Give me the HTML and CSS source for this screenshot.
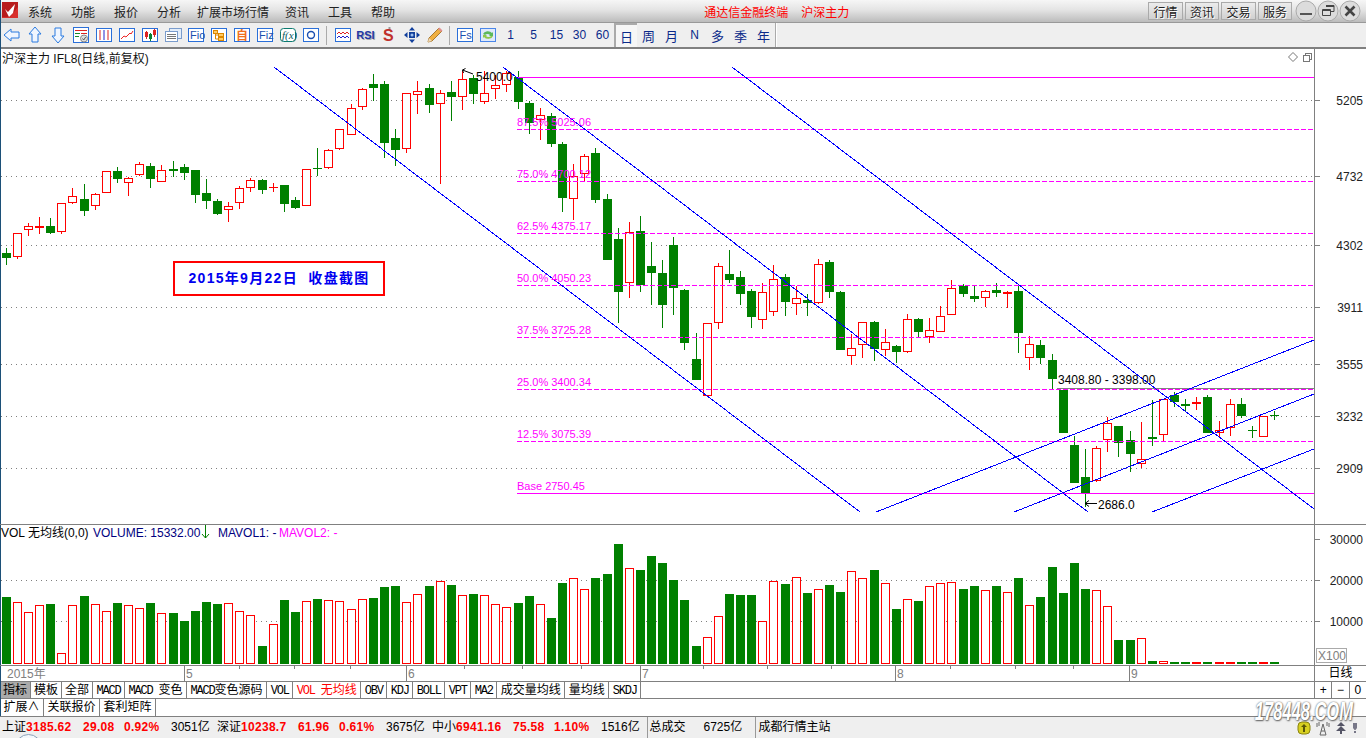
FILE: index.html
```html
<!DOCTYPE html>
<html lang="zh-CN">
<head>
  <meta charset="UTF-8" />
  <title>通达信金融终端 沪深主力</title>
  <link rel="stylesheet" href="styles.css">
</head>
<body>
<div class="app">
  <!-- menu -->
  <div class="menubar">
    <svg class="logo" width="16" height="16" viewBox="0 0 16 16"><rect width="16" height="16" fill="#d8302c"/><path d="M0 0h16v5L8 15H0z" fill="#b81c1c"/><path d="M3 7l3 3 7-8-2 9-4 4z" fill="#fff"/></svg>
    <nav class="menu">
      <span>系统</span><span>功能</span><span>报价</span><span class="menu-narrow">分析</span><span class="menu-narrow">扩展市场行情</span><span>资讯</span><span>工具</span><span>帮助</span>
    </nav>
    <div class="app-title"><span>通达信金融终端</span><span>沪深主力</span></div>
    <div class="mode-buttons"><button>行情</button><button>资讯</button><button>交易</button><button>服务</button></div>
    <div class="win-buttons">
      <svg width="22" height="22" viewBox="0 0 22 22"><circle cx="11" cy="11" r="10" class="win-circle"/><rect x="5" y="13" width="12" height="2" fill="#555"/></svg>
      <svg width="22" height="22" viewBox="0 0 22 22"><circle cx="11" cy="11" r="10" class="win-circle"/><path d="M9 5.5h8v6h-3M5.500 9.500h8v6h-8zM5.500 10.500h8M9 6.500h8" fill="none" stroke="#444"/></svg>
      <svg width="22" height="22" viewBox="0 0 22 22"><circle cx="11" cy="11" r="10" class="win-circle"/><path d="M6.500 6.500l9 9M15.500 6.500l-9 9" stroke="#444" stroke-width="2.600"/></svg>
    </div>
  </div>

  <!-- toolbar -->
  <div class="toolbar">
    <div class="tool"><svg width="18" height="16" viewBox="0 0 18 16"><path d="M1 8l7-6v3h8v6H8v3z" class="arrow"/></svg></div>
    <div class="tool"><svg width="16" height="18" viewBox="0 0 16 18"><path d="M8 1l6 7h-3v8H5V8H2z" class="arrow"/></svg></div>
    <div class="tool"><svg width="16" height="18" viewBox="0 0 16 18"><path d="M8 17l6-7h-3V2H5v8H2z" class="arrow"/></svg></div>
    <div class="tool"><svg width="18" height="18" viewBox="0 0 18 18"><rect x="1.500" y="1.500" width="15" height="15" class="box"/><path d="M3 4.500h12" stroke="#d22"/><path d="M3 7.500h5M3 10.500h4" stroke="#1a8a2a"/><path d="M9 7.500h6" stroke="#d22"/><circle cx="12" cy="12.500" r="3.500" fill="#ddd" stroke="#888"/><path d="M10.500 12.500l1.200 1.500 2-3" stroke="#555" fill="none"/></svg></div>
    <div class="tool"><svg width="18" height="16" viewBox="0 0 18 16"><rect x="1.500" y="1.500" width="15" height="13" class="box"/><path d="M4 4h2M4 6h2M4 8h2M4 10h2M4 12h2M12 4h2M12 6h2M12 8h2M12 10h2M12 12h2" stroke="#d22"/><path d="M8 4h2M8 6h2M8 8h2M8 10h2M8 12h2" stroke="#22c"/></svg></div>
    <div class="tool"><svg width="18" height="16" viewBox="0 0 18 16"><rect x="1.500" y="1.500" width="15" height="13" class="box"/><path d="M3 12l3-3 2 1 4-4 1 1 2-3" stroke="#e22" fill="none"/></svg></div>
    <div class="tool"><svg width="18" height="16" viewBox="0 0 18 16"><rect x="1.500" y="1.500" width="15" height="13" class="box"/><path d="M5.500 4v8" stroke="#d22"/><rect x="4" y="5" width="3" height="5" fill="#d22"/><path d="M9.500 6v8" stroke="#088030"/><rect x="8" y="7" width="3" height="5" fill="#088030"/><path d="M13.500 2v8" stroke="#d22"/><rect x="12" y="3" width="3" height="5" fill="#d22"/></svg></div>
    <div class="tool"><svg width="18" height="16" viewBox="0 0 18 16"><rect x="5.500" y="1.500" width="12" height="10" fill="#e4eefa" stroke="#7a9ccc"/><rect x="1.500" y="4.500" width="12" height="10" fill="#fff" stroke="#7a9ccc"/><path d="M3 7.500h9M3 9.500h9M3 11.500h9" stroke="#777"/></svg></div>
    <div class="tool"><svg width="18" height="16" viewBox="0 0 18 16"><rect x="1.500" y="1.500" width="15" height="13" class="box"/><text x="3" y="12" class="icon-text">Fio</text></svg></div>
    <div class="tool"><svg width="18" height="16" viewBox="0 0 18 16"><rect x="1.500" y="1.500" width="15" height="13" class="box"/><rect x="3.500" y="3.500" width="4" height="3" fill="#fc6" stroke="#d80"/><rect x="8.500" y="6.500" width="5" height="3" fill="#fc6" stroke="#d80"/><rect x="8.500" y="10.500" width="5" height="3" fill="#fc6" stroke="#d80"/><path d="M5.500 7v5h3M5.500 8h3" stroke="#d80" fill="none"/></svg></div>
    <div class="tool"><svg width="18" height="16" viewBox="0 0 18 16"><rect x="1.500" y="1.500" width="15" height="13" class="box"/><text x="3" y="13" class="icon-cjk">自</text></svg></div>
    <div class="tool"><svg width="18" height="16" viewBox="0 0 18 16"><rect x="1.500" y="1.500" width="15" height="13" class="box"/><text x="3" y="12" class="icon-text">Fiz</text></svg></div>
    <div class="tool"><svg width="18" height="16" viewBox="0 0 18 16"><rect x="1.500" y="1.500" width="15" height="13" rx="3" fill="#fff" stroke="#0a7a70"/><text x="3" y="12" class="icon-fx">f(x)</text></svg></div>
    <div class="tool"><svg width="18" height="16" viewBox="0 0 18 16"><rect x="1.500" y="1.500" width="15" height="13" class="box"/><circle cx="9" cy="8" r="3.500" fill="none" stroke="#1a4fb0" stroke-width="1.400"/></svg></div>
    <div class="tool-sep"></div>
    <div class="tool"><svg width="18" height="16" viewBox="0 0 18 16"><rect x="1.500" y="1.500" width="15" height="13" class="box"/><path d="M3 7l2-2 2 2 2-2 2 2 2-2 2 2" stroke="#d22" fill="none"/><path d="M3 11l2-2 2 2 2-2 2 2 2-2 2 2" stroke="#22c" fill="none"/></svg></div>
    <div class="tool"><span class="rsi">RSI</span></div>
    <div class="tool"><svg width="18" height="18" viewBox="0 0 18 18"><path d="M8.500 1h2v3h-2z" fill="#999"/><text x="3" y="15" class="icon-s">S</text></svg></div>
    <div class="tool"><svg width="18" height="18" viewBox="0 0 18 18"><path d="M9 1l3 3.500H6zM9 17l-3-3.500h6zM1 9l3.500-3v6zM17 9l-3.500 3V6z" fill="#12409c"/><rect x="6" y="6" width="6" height="6" fill="#12409c"/><circle cx="9" cy="9" r="1.500" fill="#9cc0f0"/></svg></div>
    <div class="tool"><svg width="18" height="18" viewBox="0 0 18 18"><path d="M2 16l1-4L13 2l3 3L6 15z" fill="#f0b040" stroke="#a87a30"/><path d="M2 16l1-4 3 3z" fill="#eed8b8"/><path d="M12 3l3 3 1.500-1.500-3-3z" fill="#e09090"/></svg></div>
    <div class="tool-sep tool-sep-thin"></div>
    <div class="tool"><svg width="18" height="16" viewBox="0 0 18 16"><rect x="1.500" y="1.500" width="15" height="13" class="box"/><text x="3.500" y="12" class="icon-text">Fs</text></svg></div>
    <div class="tool"><svg width="18" height="16" viewBox="0 0 18 16"><rect x="1.500" y="1.500" width="15" height="13" fill="#dfe9fb" stroke="#4a86e8"/><path d="M4 7a5 4 0 0 1 9-1l1-1v4h-4l1-1a3 2 0 0 0-5 0z" fill="#5cb85c"/><path d="M14 9a5 4 0 0 1-9 1l-1 1V8h4L7 9a3 2 0 0 0 5 0z" fill="#8fc84a"/></svg></div>
    <div class="tool period">1</div>
    <div class="tool period">5</div>
    <div class="tool period">15</div>
    <div class="tool period">30</div>
    <div class="tool period">60</div>
    <div class="tool period period-cjk period-active">日</div>
    <div class="tool period period-cjk">周</div>
    <div class="tool period period-cjk">月</div>
    <div class="tool period">N</div>
    <div class="tool period period-cjk">多</div>
    <div class="tool period period-cjk">季</div>
    <div class="tool period period-cjk">年</div>
    <div class="tool-end"></div>
  </div>

  <!-- K线 -->
  <div class="panel price-panel">
    <svg id="priceChart" width="1366" height="475" viewBox="0 49 1366 475"></svg>
    <div class="chart-title">沪深主力 IFL8(日线,前复权)</div>
    <div class="chart-note">2015年9月22日&nbsp; 收盘截图</div>
  </div>

  <!-- 成交量 -->
  <div class="panel volume-panel">
    <svg id="volumeChart" width="1366" height="140" viewBox="0 525 1366 140"></svg>
  </div>

  <div class="date-row">
    <svg id="dateAxis" width="1314" height="15" viewBox="0 666 1314 15"></svg>
    <div class="period-name">日线</div>
  </div>

  <div class="tab-row">
    <div class="tabs">
      <span class="tab tab-cjk tab-active">指标</span>
      <span class="tab tab-cjk">模板</span>
      <span class="tab tab-cjk">全部</span>
      <span class="tab"><span class="mono">MACD</span></span>
      <span class="tab"><span class="mono">MACD </span>变色</span>
      <span class="tab"><span class="mono">MACD</span>变色源码</span>
      <span class="tab"><span class="mono">VOL</span></span>
      <span class="tab tab-on"><span class="mono">VOL </span>无均线</span>
      <span class="tab"><span class="mono">OBV</span></span>
      <span class="tab"><span class="mono">KDJ</span></span>
      <span class="tab"><span class="mono">BOLL</span></span>
      <span class="tab"><span class="mono">VPT</span></span>
      <span class="tab"><span class="mono">MA2</span></span>
      <span class="tab">成交量均线</span>
      <span class="tab">量均线</span>
      <span class="tab"><span class="mono">SKDJ</span></span>
    </div>
    <div class="zoom-cells"><span>+</span><span>−</span><span>0</span></div>
  </div>

  <div class="ext-row">
    <span class="tab">扩展∧</span>
    <span class="tab">关联报价</span>
    <span class="tab">套利矩阵</span>
  </div>

  <!-- 状态栏 -->
  <div class="statusbar">
    <div class="status-index"><span>上证</span><b>3185.62</b><b>29.08</b><b>0.92%</b><span>3051亿</span></div>
    <div class="status-index"><span>深证</span><b>10238.7</b><b>61.96</b><b>0.61%</b><span>3675亿</span></div>
    <div class="status-index"><span>中小</span><b>6941.16</b><b>75.58</b><b>1.10%</b><span>1516亿</span></div>
    <div class="status-total"><span>总成交</span><span>6725亿</span></div>
    <div class="status-site">成都行情主站</div>
    <div class="status-icons">
      <svg width="14" height="14" viewBox="0 0 14 14"><rect x="1" y="1" width="12" height="12" rx="4" fill="#d8d020" stroke="#8a8410"/><path d="M7 3l3 3H8v5H6V6H4z" fill="#5a5608"/></svg>
      <svg width="14" height="16" viewBox="0 0 14 16"><path d="M7 4L4 15h6zM5 11h4M1 3v4M13 3v4M3 2v4M11 2v4" fill="none" stroke="#666"/></svg>
      <svg width="12" height="14" viewBox="0 0 12 14"><path d="M6 1l4 4H2zM6 5l5 5H1zM5 10h2v3H5z" fill="#556"/></svg>
      <svg width="6" height="12" viewBox="0 0 6 12"><path d="M1 1h4v5L3.500 8h-1L1 6zM2 9h2v2H2z" fill="#778"/></svg>
    </div>
  </div>

  <div class="start-orb"></div>
  <div class="watermark">178448.COM</div>
</div>
<script src="chart.js"></script>
</body>
</html>
```
FILE: styles.css
```css
html, body {
  margin: 0;
  height: 100%;
  overflow: hidden;
  background: #fff;
}
body, svg text {
  font-family: "Liberation Sans", "Noto Sans CJK SC", sans-serif;
  font-size: 12px;
  color: #000;
}
.app {
  position: relative;
  width: 1366px;
  height: 738px;
  overflow: hidden;
}
.app::before {
  content: "";
  position: absolute;
  left: 0;
  top: 0;
  bottom: 22px;
  width: 1px;
  background: #1c5078;
}

/* menu */
.menubar {
  display: flex;
  align-items: center;
  height: 22px;
  border-bottom: 1px solid #999;
  background: linear-gradient(#f6f6f6, #e4e4e4 45%, #bcbcbc);
}
.logo { margin: 0 0 2px 2px; }
.menu {
  display: flex;
  gap: 19px;
  margin-left: 10px;
  color: #222;
}
.menu-narrow { margin-right: -3px; }
.app-title {
  display: flex;
  gap: 13px;
  margin-left: 309px;
  color: #f00;
}
.mode-buttons {
  display: flex;
  gap: 2px;
  margin-left: 299px;
}
.mode-buttons button {
  width: 34.5px;
  height: 18px;
  padding: 0;
  border: 1px solid #aaa;
  background: linear-gradient(#ececec, #d0d0d0);
  font: inherit;
  color: #222;
  text-shadow: 1px 1px 0 #fff;
}
.win-buttons {
  display: flex;
  margin-left: 3px;
}
.win-circle {
  fill: #dcdcdc;
  stroke: #aaa;
}

/* toolbar */
.toolbar {
  display: flex;
  height: 24px;
  border-bottom: 2px solid #808080;
  background: #efefef;
}
.tool {
  display: flex;
  align-items: center;
  justify-content: center;
  flex: none;
  width: 23px;
}
.arrow {
  fill: #f0f6ff;
  stroke: #2a7ae0;
}
.box {
  fill: #fff;
  stroke: #2a6fd8;
}
.icon-text {
  font-size: 11px;
  fill: #1a4fb0;
}
.icon-cjk {
  font-size: 12px;
  font-weight: bold;
  fill: #f07020;
}
.icon-fx {
  font-family: "Liberation Serif", serif;
  font-size: 11px;
  font-style: italic;
  fill: #0a5a60;
}
.icon-s {
  font-size: 16px;
  font-weight: bold;
  fill: #c0302c;
}
.rsi {
  font-size: 11px;
  font-weight: bold;
  color: #2236a8;
  text-shadow: 1px 1px 0 #aaa;
}
.tool-sep {
  flex: none;
  width: 1px;
  margin: 3px 4px 2px 4px;
  background: #aaa;
}
.tool-sep-thin {
  margin: 3px 3px 2px 3px;
}
.period {
  color: #0a2a8a;
}
.period-cjk {
  font-size: 13px;
}
.period-active {
  box-sizing: border-box;
  border-left: 2px solid #aaa;
  border-top: 2px solid #aaa;
  background: #f6f6f6;
}
.tool-end {
  flex: none;
  width: 1px;
  background: #aaa;
  margin-left: 0;
  box-shadow: 1px 0 0 #fff;
}

/* chart panels */
.panel {
  position: relative;
  border-bottom: 1px solid #808080;
}
.panel svg {
  display: block;
}
.panel svg text {
  fill: #000;
}
.chart-title {
  position: absolute;
  left: 2px;
  top: 0;
  color: #111;
}
.chart-note {
  position: absolute;
  left: 173px;
  top: 212px;
  box-sizing: border-box;
  width: 212px;
  height: 35px;
  border: 2px solid #f00;
  background: #fff;
  color: #0000f0;
  font-size: 14px;
  font-weight: bold;
  letter-spacing: 1.3px;
  line-height: 31px;
  text-align: center;
}
.panel svg .fib-label { fill: #f0f; font-size: 11px; }
.panel svg .axis-label { fill: #222; }
.panel svg .vol-name { fill: #000080; }
.panel svg .vol-magenta { fill: #f0f; }

/* date axis + tabs */
.date-row, .tab-row, .ext-row {
  display: flex;
  border-bottom: 1px solid #808080;
}
.date-row { height: 15px; }
.date-row svg { display: block; flex: none; }
.date-row svg text { fill: #808080; }
.period-name {
  flex: 1;
  border-left: 1px solid #808080;
  line-height: 15px;
  text-align: center;
}
.tab-row { height: 16px; }
.tabs {
  display: flex;
  flex: none;
  width: 1314px;
}
.tab {
  box-sizing: content-box;
  padding: 0 3.5px;
  border-right: 1px solid #808080;
  line-height: 16px;
  white-space: pre;
}
.tab-cjk { padding: 0 3px; }
.tab-active { background: #aaa; }
.tab-on { color: #f00; }
.mono {
  font-family: "Liberation Mono", monospace;
  font-size: 12px;
  letter-spacing: -1.2px;
}
.zoom-cells {
  display: flex;
  flex: 1;
  border-left: 1px solid #808080;
}
.zoom-cells span {
  flex: 1;
  border-right: 1px solid #808080;
  line-height: 16px;
  text-align: center;
}
.zoom-cells span:last-child { border-right: 0; }
.ext-row { height: 17px; }
.ext-row .tab { line-height: 17px; }

/* status */
.statusbar {
  display: flex;
  align-items: center;
  height: 21px;
  padding-left: 2px;
  background: #efefef;
}
.status-index {
  display: grid;
  flex: none;
  grid-template-columns: 24px 57px 41px 47px 46px;
  align-items: baseline;
  width: 215px;
  line-height: 21px;
}
.status-index:nth-child(3) { width: 214.5px; }
.status-index b {
  color: #f00;
  letter-spacing: 0.3px;
}
.status-total {
  display: grid;
  flex: none;
  grid-template-columns: 54px 48px;
  height: 21px;
  padding-left: 2px;
  border-left: 1px solid #999;
  width: 105px;
  line-height: 21px;
}
.status-site {
  flex: none;
  padding-left: 3px;
  border-left: 1px solid #999;
  line-height: 21px;
}
.status-icons {
  display: flex;
  align-items: center;
  gap: 5px;
  margin-left: auto;
  padding-right: 8px;
}
.start-orb {
  position: absolute;
  left: 15px;
  top: 734px;
  width: 25px;
  height: 25px;
  border: 1px solid #8aa0b8;
  border-radius: 50%;
  background: #f4f8fb;
}
.watermark {
  position: absolute;
  left: 1232px;
  top: 697px;
  width: 134px;
  color: #fff;
  font-size: 25px;
  font-weight: bold;
  font-style: italic;
  text-align: center;
  text-shadow: 0 0 2px #555, 1px 1px 2px #666;
  transform: scaleX(0.66);
}
```
FILE: chart.js
```js
// x, 阴阳, wick top, body top, body bottom, wick bottom, volume top
const candles = [
  [6,'g',248,253,257,264,597],[17,'r',233,233,256,258,602],[28,'r',223,226,229,235,612],[39,'r',217,226,227,233,605],
  [50,'g',218,226,232,233,604],[61,'r',203,203,231,233,653],[72,'r',188,196,202,203,605],[84,'g',184,199,210,215,596],
  [95,'r',193,194,205,209,604],[106,'r',171,171,192,192,611],[117,'g',167,171,178,182,603],[128,'r',177,178,182,195,605],
  [139,'r',162,164,174,175,608],[150,'g',163,166,178,187,603],[161,'r',165,170,181,181,613],[173,'g',161,169,170,176,613],
  [184,'g',164,167,172,179,621],[195,'g',170,170,194,202,611],[206,'g',179,193,200,208,602],[217,'g',199,201,213,214,604],
  [228,'r',202,206,209,221,603],[239,'r',186,188,202,208,611],[250,'r',178,180,187,191,615],[262,'g',179,180,189,193,646],
  [273,'r',183,187,187,191,624],[284,'g',185,185,203,211,600],[295,'g',197,200,207,208,612],[306,'r',169,169,205,205,601],
  [317,'g',148,168,168,175,599],[328,'r',149,150,167,168,600],[339,'r',129,129,148,149,601],[351,'r',104,108,134,134,609],
  [362,'r',88,89,106,109,599],[373,'g',74,84,87,100,598],[384,'g',81,84,142,157,587],[395,'g',129,138,149,165,586],
  [406,'r',93,93,148,152,602],[417,'r',81,91,94,113,594],[429,'g',84,88,104,112,586],[440,'r',90,93,103,183,581],
  [451,'g',81,92,96,120,585],[462,'r',71,79,96,109,595],[473,'g',75,78,93,103,594],[484,'r',71,93,101,103,595],
  [495,'r',75,85,88,98,604],[506,'r',71,73,84,91,607],[518,'g',71,77,101,108,603],[529,'g',101,103,122,133,596],
  [540,'r',108,115,119,139,604],[551,'g',113,116,143,146,618],[562,'g',142,144,197,211,583],[573,'r',164,176,198,219,578],
  [584,'r',154,156,173,181,589],[595,'g',148,153,199,202,578],[607,'g',194,199,259,259,574],[618,'g',228,239,291,322,544],
  [629,'r',222,232,282,297,568],[640,'g',216,231,284,291,570],[651,'g',242,266,272,304,556],[662,'g',260,273,304,327,563],
  [673,'g',237,245,287,314,580],[684,'g',289,290,342,349,600],[696,'g',333,359,379,379,646],[707,'r',323,323,395,395,637],
  [718,'r',263,266,322,328,616],[729,'g',250,274,279,282,594],[740,'g',271,277,293,304,595],[751,'g',289,291,316,327,595],
  [762,'r',283,292,319,328,621],[773,'r',265,279,311,315,581],[785,'g',274,277,301,315,584],[796,'r',286,298,303,314,577],
  [807,'g',294,300,302,315,593],[818,'r',259,264,302,303,589],[829,'g',260,262,291,297,585],[840,'g',291,292,349,349,592],
  [851,'r',334,348,355,364,571],[862,'r',322,322,344,357,578],[874,'g',321,322,348,360,570],[885,'r',329,342,349,355,583],
  [896,'g',345,346,351,362,609],[907,'r',314,319,351,352,599],[918,'g',318,319,331,337,601],[929,'r',318,330,336,342,586],
  [940,'r',306,316,331,331,583],[951,'r',280,288,314,314,582],[963,'g',284,286,293,296,589],[974,'g',285,296,298,301,586],
  [985,'r',290,291,297,306,590],[996,'g',283,290,292,296,586],[1007,'r',291,292,293,307,592],[1018,'g',284,291,332,352,578],
  [1029,'r',336,344,357,369,605],[1040,'g',340,345,357,363,597],[1052,'g',354,360,378,388,567],[1063,'g',388,390,432,432,593],
  [1074,'g',436,445,482,482,563],[1085,'g',449,477,493,506,589],[1096,'r',446,448,480,481,590],[1107,'r',417,423,439,451,606],
  [1118,'g',426,426,442,456,640],[1130,'g',431,440,453,471,640],[1141,'r',422,459,463,467,638],[1152,'g',400,437,438,445,661],
  [1163,'r',399,399,434,441,661],[1174,'g',392,395,401,406,662],[1185,'g',399,404,405,410,662],[1196,'r',397,402,403,409,662],
  [1207,'g',395,397,432,432,662],[1219,'r',421,430,432,437,662],[1230,'r',399,404,427,435,662],[1241,'g',398,404,415,417,662],
  [1252,'g',426,430,430,437,662],[1263,'r',416,416,436,436,662],[1274,'g',411,415,415,419,662]
];

const priceTicks = [[5205,100],[4732,176],[4302,245],[3911,307],[3555,364],[3232,416],[2909,468]];
const volTicks = [[30000,539],[20000,580],[10000,621]];

const fibLines = [
  ['87.5% 5025.06',129],['75.0% 4700.12',181],['62.5% 4375.17',233],['50.0% 4050.23',285],
  ['37.5% 3725.28',337],['25.0% 3400.34',389],['12.5% 3075.39',441]
];

const channelLines = [
  [274,67,860,512],[503,67,1088,512],[732,67,1314,509],
  [876,512,1314,340],[1014,512,1314,394],[1152,512,1314,449]
];

const GREEN = '#008000';
const RED = '#ff0000';
const GRAY = '#808080';
const MAGENTA = '#ff00ff';
const BLUE = '#0000ff';

function add(parent, tag, attrs, text) {
  const node = document.createElementNS('http://www.w3.org/2000/svg', tag);
  for (const k in attrs) node.setAttribute(k, attrs[k]);
  if (text) node.textContent = text;
  parent.appendChild(node);
  return node;
}

function hline(svg, y, x1, x2, color, dash) {
  const attrs = { x1: x1, x2: x2, y1: y + 0.5, y2: y + 0.5, stroke: color, 'shape-rendering': 'crispEdges' };
  if (dash) attrs['stroke-dasharray'] = dash;
  add(svg, 'line', attrs);
}

function axisLine(svg, top, bottom) {
  add(svg, 'line', { x1: 1314.5, x2: 1314.5, y1: top, y2: bottom, stroke: GRAY, 'shape-rendering': 'crispEdges' });
}

function drawCandle(svg, c) {
  const [x, kind, wt, bt, bb, wb] = c;
  const color = kind === 'g' ? GREEN : RED;
  add(svg, 'line', { x1: x + 0.5, x2: x + 0.5, y1: wt, y2: wb + 1, stroke: color, 'shape-rendering': 'crispEdges' });
  if (kind === 'g' || bb - bt < 2) {
    add(svg, 'rect', { x: x - 4, y: bt, width: 9, height: bb - bt + 1, fill: color, 'shape-rendering': 'crispEdges' });
  } else {
    add(svg, 'rect', { x: x - 3.5, y: bt + 0.5, width: 8, height: bb - bt, fill: '#fff', stroke: color, 'shape-rendering': 'crispEdges' });
  }
}

function drawPrice() {
  const svg = document.getElementById('priceChart');
  priceTicks.forEach(([label, y]) => {
    hline(svg, y, 1, 1314, GRAY, '1 4');
    hline(svg, y, 1315, 1320, GRAY);
    add(svg, 'text', { x: 1363, y: y + 5, 'text-anchor': 'end', class: 'axis-label' }, String(label));
  });

  candles.forEach(c => drawCandle(svg, c));

  hline(svg, 77, 516, 1314, MAGENTA);
  hline(svg, 493, 517, 1314, MAGENTA);
  fibLines.forEach(([label, y]) => hline(svg, y, 517, 1314, MAGENTA, '5 2'));
  hline(svg, 388, 1057, 1314, GRAY);

  channelLines.forEach(([x1, y1, x2, y2]) => {
    add(svg, 'line', { x1, y1, x2, y2, stroke: BLUE, 'shape-rendering': 'crispEdges' });
  });

  fibLines.forEach(([label, y]) => {
    add(svg, 'text', { x: 517, y: y - 3, class: 'fib-label' }, label);
  });
  add(svg, 'text', { x: 517, y: 490, class: 'fib-label' }, 'Base 2750.45');

  // 最高 最低 标注
  add(svg, 'path', { d: 'M473 74L462.500 70M462.500 70l3-1.500M462.500 70l1 3', stroke: '#000', fill: 'none' });
  add(svg, 'text', { x: 476, y: 81 }, '5400.0');
  add(svg, 'path', { d: 'M1085 503.500h12M1085 503.500l4-3M1085 503.500l4 3', stroke: '#000', fill: 'none' });
  add(svg, 'text', { x: 1098, y: 509 }, '2686.0');
  add(svg, 'text', { x: 1058, y: 384 }, '3408.80 - 3398.00');

  axisLine(svg, 49, 524);

  // 右上角小图标
  add(svg, 'path', { d: 'M1293 52.500l4.500 4.500-4.500 4.500-4.500-4.500z', fill: '#fff', stroke: '#777' });
  add(svg, 'path', { d: 'M1303.500 55.500h6v6h-6zM1305.500 55.500v-2h6v6h-2', fill: 'none', stroke: '#777', 'shape-rendering': 'crispEdges' });
}

function drawVolume() {
  const svg = document.getElementById('volumeChart');
  volTicks.forEach(([label, y]) => {
    if (label < 30000) hline(svg, y, 1, 1314, GRAY, '1 4');
    hline(svg, y, 1315, 1320, GRAY);
    add(svg, 'text', { x: 1363, y: y + 5, 'text-anchor': 'end', class: 'axis-label' }, String(label));
  });

  candles.forEach(c => {
    const x = c[0];
    const top = c[6];
    if (c[1] === 'g') {
      add(svg, 'rect', { x: x - 4, y: top, width: 9, height: 664 - top, fill: GREEN, 'shape-rendering': 'crispEdges' });
    } else {
      add(svg, 'rect', { x: x - 3.5, y: top + 0.5, width: 8, height: 663 - top, fill: '#fff', stroke: RED, 'shape-rendering': 'crispEdges' });
    }
  });

  add(svg, 'text', { x: 1, y: 537 }, 'VOL 无均线(0,0)');
  add(svg, 'text', { x: 93, y: 537, class: 'vol-name' }, 'VOLUME: 15332.00');
  add(svg, 'path', { d: 'M205.500 525v13M202 534l3.500 4 3.500-4', stroke: GREEN, fill: 'none' });
  add(svg, 'text', { x: 218, y: 537, class: 'vol-name' }, 'MAVOL1: -');
  add(svg, 'text', { x: 279, y: 537, class: 'vol-magenta' }, 'MAVOL2: -');

  axisLine(svg, 525, 665);
  add(svg, 'rect', { x: 1316.5, y: 648.5, width: 30, height: 14, fill: '#fff', stroke: '#aaa', 'shape-rendering': 'crispEdges' });
  add(svg, 'text', { x: 1318, y: 660, style: 'fill:#808080' }, 'X100');
}

function drawDates() {
  const svg = document.getElementById('dateAxis');
  [239, 294, 350, 464, 522, 581, 703, 767, 831, 950, 1015, 1073].forEach(x => {
    add(svg, 'line', { x1: x + 0.5, x2: x + 0.5, y1: 666, y2: 669, stroke: GRAY, 'shape-rendering': 'crispEdges' });
  });
  [[184, '5'], [406, '6'], [640, '7'], [895, '8'], [1129, '9']].forEach(([x, label]) => {
    add(svg, 'line', { x1: x + 0.5, x2: x + 0.5, y1: 666, y2: 681, stroke: GRAY, 'shape-rendering': 'crispEdges' });
    add(svg, 'text', { x: x + 2, y: 678 }, label);
  });
  add(svg, 'text', { x: 7, y: 678 }, '2015年');
}

drawPrice();
drawVolume();
drawDates();
```
